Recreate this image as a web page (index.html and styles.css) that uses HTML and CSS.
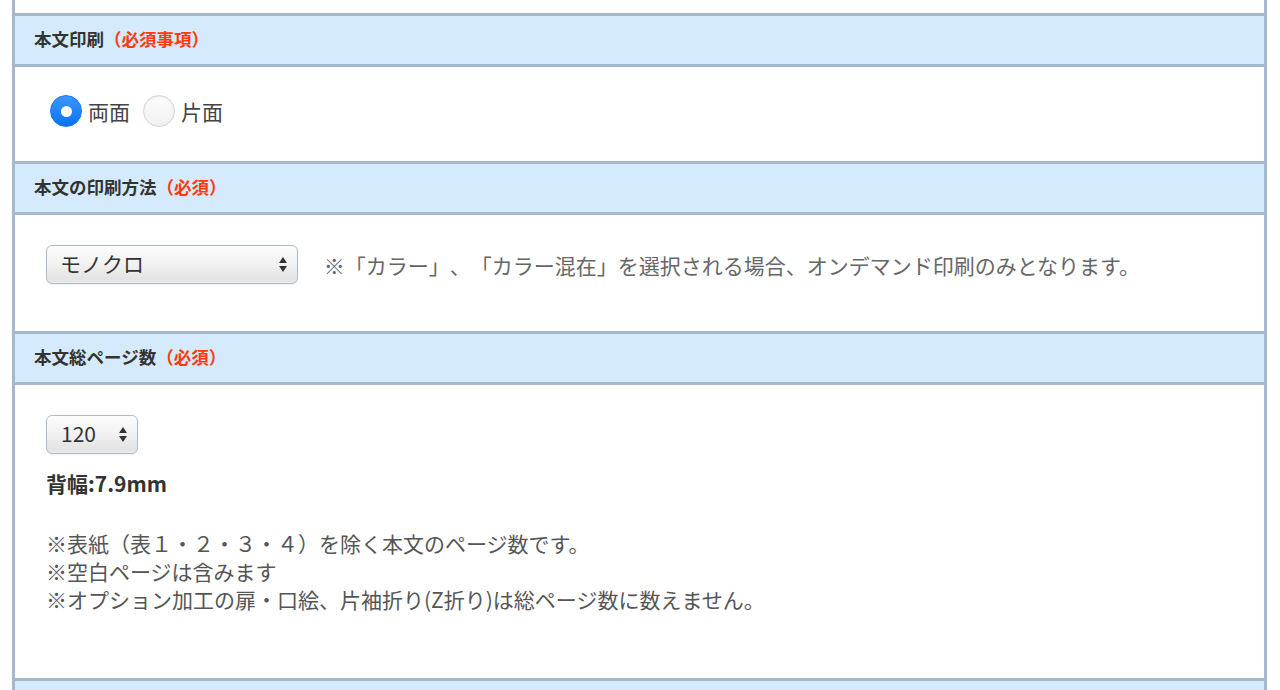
FILE: index.html
```html
<!DOCTYPE html>
<html>
	<head>
		<meta charset="UTF-8">
		<title>本文設定</title>
		<link rel="stylesheet" href="styles.css">
	</head>
	<body>
		<div class="form">
			<div class="sec-body sec-prev"></div>

			<div class="sec-head">本文印刷<span class="req">（必須事項）</span></div>
			<div class="sec-body sec-radio">
				<label class="radio"><input type="radio" name="side" checked>両面</label>
				<label class="radio"><input type="radio" name="side">片面</label>
			</div>

			<div class="sec-head">本文の印刷方法<span class="req">（必須）</span></div>
			<div class="sec-body sec-color">
				<span class="sel sel-wide">
					<select>
						<option>モノクロ</option>
						<option>カラー</option>
						<option>カラー混在</option>
					</select>
				</span>
				<span class="note">※「カラー」、「カラー混在」を選択される場合、オンデマンド印刷のみとなります。</span>
			</div>

			<div class="sec-head">本文総ページ数<span class="req">（必須）</span></div>
			<div class="sec-body sec-pages">
				<span class="sel sel-small">
					<select>
						<option>120</option>
					</select>
				</span>
				<p class="spine">背幅:7.9mm</p>
				<p class="note-list">
					※表紙（表１・２・３・４）を除く本文のページ数です。<br>
					※空白ページは含みます<br>
					※オプション加工の扉・口絵、片袖折り(Z折り)は総ページ数に数えません。
				</p>
			</div>

			<div class="sec-head sec-next"></div>
		</div>
	</body>
</html>
```

FILE: styles.css
```css
html,body,div,p,span,label {
	margin: 0;
	padding: 0;
}
body {
	background-color: #fff;
	font-family: "Noto Sans CJK JP", "Noto Sans", sans-serif;
	color: #333;
	overflow: hidden;
	text-spacing-trim: space-all;
}

.form {
	width: 1249px;
	height: 690px;
	overflow: hidden;
	margin-left: 12px;
	border-left: 3px solid #a6b8cb;
	border-right: 3px solid #a6b8cb;
}
.sec-head {
	height: 48px;
	line-height: 46px;
	padding-left: 19px;
	background-color: #d5ebfd;
	border-top: 3px solid #a6b8cb;
	border-bottom: 3px solid #a6b8cb;
	font-size: 17.5px;
	font-weight: bold;
	color: #333;
}
.sec-head .req {
	color: #ff3a0a;
}
.sec-body {
	padding-left: 31px;
	font-size: 21px;
}
.sec-prev {
	height: 13px;
}
.sec-next {
	border-bottom: none;
}

/* 両面 / 片面 */
.sec-radio {
	height: 94px;
	box-sizing: border-box;
	padding-bottom: 6px;
	display: flex;
	align-items: center;
	padding-left: 35px;
}
.radio {
	display: flex;
	align-items: center;
	margin-right: 13px;
	color: #444;
	cursor: pointer;
}
.radio input {
	-webkit-appearance: none;
	appearance: none;
	width: 32px;
	height: 32px;
	margin: 0 6px 0 0;
	border-radius: 50%;
	border: 1px solid #d4d4d4;
	background: linear-gradient(#fdfdfd, #f0f0f0);
	box-shadow: inset 0 1px 2px rgba(0,0,0,0.08);
	position: relative;
}
.radio input:checked {
	border-color: #1677f0;
	background: linear-gradient(#3b97fb, #0a72f2);
	box-shadow: none;
}
.radio input:checked:after {
	content: "";
	position: absolute;
	left: 50%;
	top: 50%;
	width: 11px;
	height: 11px;
	margin: -5.5px 0 0 -5.5px;
	border-radius: 50%;
	background-color: #fff;
}

/* セレクト */
.sel {
	display: inline-block;
	position: relative;
	vertical-align: middle;
}
.sel select {
	-webkit-appearance: none;
	appearance: none;
	display: block;
	height: 39px;
	padding: 0 0 3px 13px;
	border: 1px solid #a9bdcf;
	border-radius: 6px;
	background: linear-gradient(#fdfdfd 0%, #f2f2f2 45%, #e3e3e3 92%, #ececec 100%);
	box-shadow: 0 1px 1px rgba(0,0,0,0.06);
	font-family: "Noto Sans CJK JP", "Noto Sans", sans-serif;
	font-size: 21px;
	color: #333;
	outline: none;
}
.sel:before,.sel:after {
	content: "";
	position: absolute;
	right: 11px;
	width: 0;
	height: 0;
	border-left: 4.5px solid transparent;
	border-right: 4.5px solid transparent;
	pointer-events: none;
}
.sel:before {
	top: 12px;
	border-bottom: 6px solid #333;
}
.sel:after {
	top: 21px;
	border-top: 6px solid #333;
}
.sel-wide select {
	width: 252px;
}
.sel-small select {
	width: 92px;
	padding-left: 14px;
}

.sec-color {
	height: 116px;
	box-sizing: border-box;
	padding-top: 30px;
}
.sec-color .note {
	margin-left: 21px;
	vertical-align: middle;
	color: #666;
	font-size: 21px;
}

.sec-pages {
	height: 293px;
	box-sizing: border-box;
	padding-top: 30px;
}
.sec-pages .spine {
	margin-top: 15px;
	line-height: 28px;
	font-weight: bold;
	color: #333;
}
.sec-pages .note-list {
	margin-top: 32px;
	line-height: 28px;
	font-size: 21px;
	color: #555;
}
```
